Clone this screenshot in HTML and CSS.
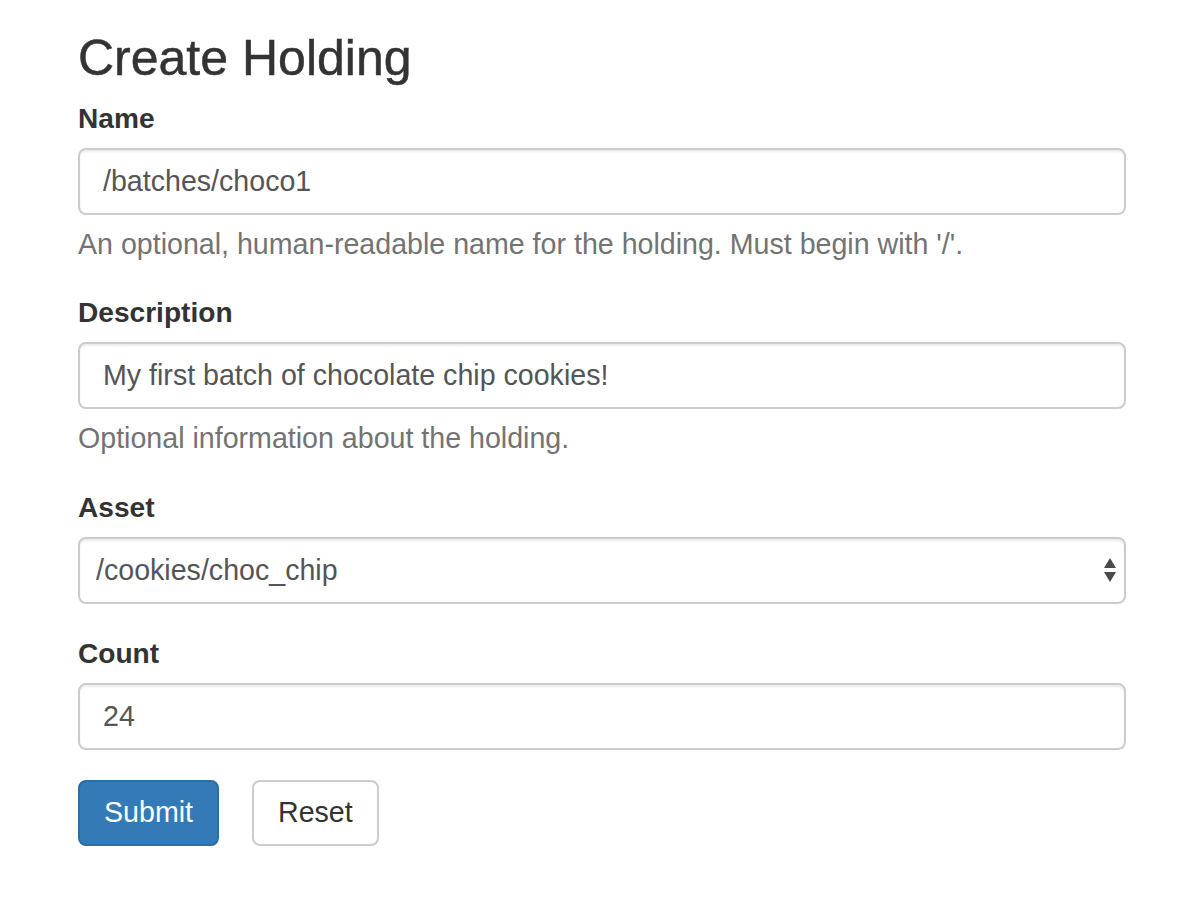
FILE: index.html
```html
<!DOCTYPE html>
<html>
<head>
<meta charset="utf-8">
<link rel="stylesheet" href="styles.css">
</head>
<body>
<div class="container">
  <h3 class="title">Create Holding</h3>
  <form class="form">
    <div class="form-group">
      <label class="label">Name</label>
      <input class="form-control" type="text" value="/batches/choco1">
      <span class="help-block">An optional, human-readable name for the holding. Must begin with '/'.</span>
    </div>
    <div class="form-group">
      <label class="label">Description</label>
      <input class="form-control" type="text" value="My first batch of chocolate chip cookies!">
      <span class="help-block">Optional information about the holding.</span>
    </div>
    <div class="form-group">
      <label class="label">Asset</label>
      <div class="select-wrap">
        <select class="form-control select">
          <option>/cookies/choc_chip</option>
        </select>
        <svg class="select-arrows" width="14" height="26" viewBox="0 0 14 26">
          <polygon points="7,1 13,11 1,11" fill="#4a4a4a"/>
          <polygon points="1,15 13,15 7,25" fill="#4a4a4a"/>
        </svg>
      </div>
    </div>
    <div class="form-group">
      <label class="label">Count</label>
      <input class="form-control" type="text" value="24">
    </div>
    <div class="actions">
      <button type="button" class="btn btn-primary">Submit</button>
      <button type="button" class="btn btn-default">Reset</button>
    </div>
  </form>
</div>
</body>
</html>
```

FILE: styles.css
```css
html, body {
  margin: 0;
  padding: 0;
  background: #fff;
}
body {
  font-family: "Liberation Sans", Arial, sans-serif;
  font-size: 28.6px;
  line-height: 39px;
  color: #333;
}
.container {
  width: 1048px;
  margin-left: 78px;
}
.title {
  font-size: 50px;
  font-weight: 500;
  line-height: 55px;
  margin: 31px 0 13px 0;
  color: #333;
  -webkit-text-stroke: 0.5px #333;
}
.form-group {
  margin-bottom: 30px;
}
.form-group:first-child .help-block {
  margin-top: 9.5px;
}
.label {
  display: block;
  font-weight: bold;
  font-size: 28.1px;
  margin-bottom: 10px;
}
.form-control {
  display: block;
  box-sizing: border-box;
  width: 100%;
  height: 67px;
  padding: 0 23px;
  font-family: inherit;
  font-size: 28.6px;
  color: #555;
  background: #fff;
  border: 2px solid #ccc;
  border-radius: 8px;
  box-shadow: inset 0 2px 2px rgba(0,0,0,.075);
  margin: 0;
  outline: none;
}
.help-block {
  display: block;
  margin-top: 10px;
  margin-bottom: 20px;
  color: #737373;
}
.form-group:first-child {
  margin-bottom: 29px;
}
.select-wrap {
  position: relative;
}
.select {
  -webkit-appearance: none;
  appearance: none;
  padding-left: 16px;
}
.select-arrows {
  position: absolute;
  right: 9px;
  top: 20px;
}
.actions {
  display: flex;
  gap: 33px;
}
.btn {
  box-sizing: border-box;
  height: 66px;
  padding: 0 24px;
  font-family: inherit;
  font-size: 28.6px;
  border-radius: 8px;
  border: 2px solid;
  cursor: pointer;
}
.btn-primary {
  background: #337ab7;
  border-color: #2e6da4;
  color: #fff;
}
.btn-default {
  background: #fff;
  border-color: #ccc;
  color: #333;
}
```
